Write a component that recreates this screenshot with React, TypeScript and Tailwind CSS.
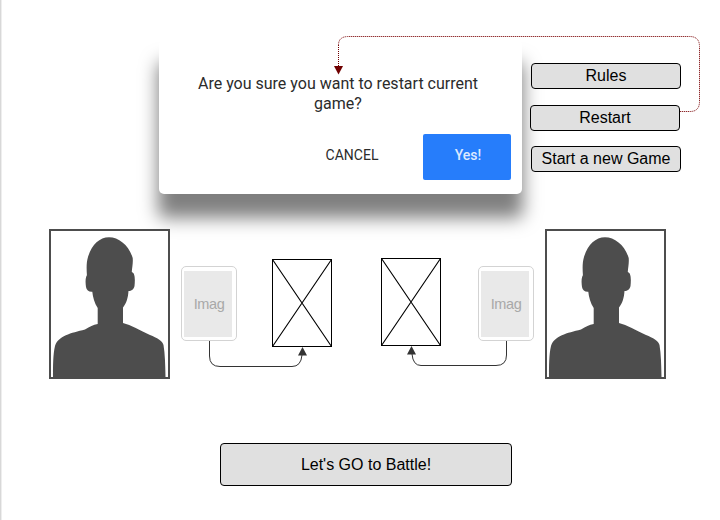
import React from "react";

function Silhouette() {
  return (
    <div className="h-[150px] w-[121px] shrink-0 border-2 border-[#4d4d4d] bg-white">
      <svg viewBox="2 2 117 146" className="block h-full w-full" fill="#4d4d4d">
        <path d="M38.5 52.5C37.5 43 37 34 39 28C42.500 16 50.500 8.200 60 8.200C70 8.200 80 16.500 83.700 29C84.200 34 83 39 82.800 43C86.500 44 86 52 85.500 57C85 60 82.500 62 79.500 62C79 69 77.500 74 74 78.500L74 94C82 96 91 101.500 101 106C108 109 113.500 111.500 114.500 116C116 125 116.300 136 116.500 148L4 148C4 137 4 125 6 117C9 107 22 104 36 100.500C41 97.500 44 96 48.700 95L48.700 79C45.500 74.500 43.800 68 43.300 62.800C40 63.200 37.500 61 37 58C36.300 53 36 46.500 39.500 44.500Z" />
      </svg>
    </div>
  );
}

function ImageCard() {
  return (
    <div className="h-[75px] w-[56px] shrink-0 rounded-[5px] border border-[#d3d3d3] bg-white pt-1 pl-[2px]">
      <div className="flex h-[66px] w-[48px] items-center justify-center bg-[#e9e9e9] pt-[2px] pl-[2px] text-[14.5px] tracking-[-0.4px] text-[#a8a8a8]">
        Imag
      </div>
    </div>
  );
}

function Placeholder() {
  return (
    <svg viewBox="0 0 60 88" className="block h-[88px] w-[60px] shrink-0" fill="white" stroke="black">
      <rect x=".5" y=".5" width="59" height="87" />
      <path d="M.5.5 59.5 87.5M59.500.5.5 87.500" strokeWidth="1.150" />
    </svg>
  );
}

const menuButton =
  "flex h-[26px] w-[150px] items-center justify-center rounded-[4px] border border-black bg-[#e0e0e0] text-[16px] leading-[18px] whitespace-nowrap text-black";

export default function App() {
  return (
    <div className="relative flex h-[520px] w-[720px] flex-col overflow-hidden border-l border-[#d8d8d8] bg-white pl-px font-['Liberation_Sans',Arial,sans-serif] shadow-[inset_1px_0_0_#eeeeee]">
      <header className="flex h-[229px] items-start pt-[40px] pl-[157px]">
        <section className="flex h-[154px] w-[363px] flex-col rounded-[5px] bg-white pt-[34px] font-[Roboto,sans-serif] shadow-[0_23px_18px_1px_rgba(0,0,0,0.5)]">
          <p className="ml-[29px] w-[300px] text-center text-[16px] leading-5 text-[#2b2b2b]">
            Are you sure you want to restart current game?
          </p>
          <div className="mt-[20px] flex justify-end pr-[11px]">
            <button className="h-[46px] w-[143px] pb-[3px] pl-px text-[14px] text-[#2b2b2b]">CANCEL</button>
            <button className="h-[46px] w-[88px] rounded-[2px] bg-[#267dfb] pb-[3px] pl-[2px] text-[14px] font-medium text-[#dce9ff]">
              Yes!
            </button>
          </div>
        </section>
        <nav className="ml-[8px] flex flex-col pt-[23px]">
          <button className={`${menuButton} ml-px`}>Rules</button>
          <button className={`${menuButton} mt-4`}>Restart</button>
          <button className={`${menuButton} mt-[15px] ml-px`}>Start a new Game</button>
        </nav>
      </header>
      <main className="flex h-[214px] items-start pl-[47px]">
        <Silhouette />
        <div className="mt-[37px] ml-[11px]">
          <ImageCard />
        </div>
        <div className="mt-[30px] ml-[35px]">
          <Placeholder />
        </div>
        <div className="mt-[29px] ml-[49px]">
          <Placeholder />
        </div>
        <div className="mt-[37px] ml-[37px]">
          <ImageCard />
        </div>
        <div className="ml-[11px]">
          <Silhouette />
        </div>
      </main>
      <footer className="pl-[218px]">
        <button className="h-[43px] w-[292px] rounded-[4px] border border-black bg-[#e0e0e0] text-[16px] text-black">
          Let's GO to Battle!
        </button>
      </footer>
      {/* Connectors between the controls and the elements they act on */}
      <svg className="pointer-events-none absolute top-0 -left-px h-[520px] w-[720px]" viewBox="0 0 720 520" fill="none">
        <path
          d="M680 111.500H690Q699.500 111.500 699.500 101.500V46.500Q699.500 36.500 689.500 36.500H348.500Q338.500 36.500 338.500 45"
          stroke="#8f2a2c"
          strokeDasharray="1.300 0.700"
        />
        <path d="M338.500 45V66" stroke="#700000" strokeDasharray="1 1" />
        <path d="M334 66h9l-4.500 8.500z" fill="#700000" />
        <g stroke="#333">
          <path d="M209.500 341V356Q209.500 366.500 220 366.500H292Q301 366.500 302 355" />
          <path d="M506.500 341V355Q506.500 365.500 496 365.500H421Q413 365.500 412 354" />
        </g>
        <path d="M302.500 347l4.500 8.500h-9zM411.500 346l4.500 8.500h-9z" fill="#333" />
      </svg>
    </div>
  );
}
